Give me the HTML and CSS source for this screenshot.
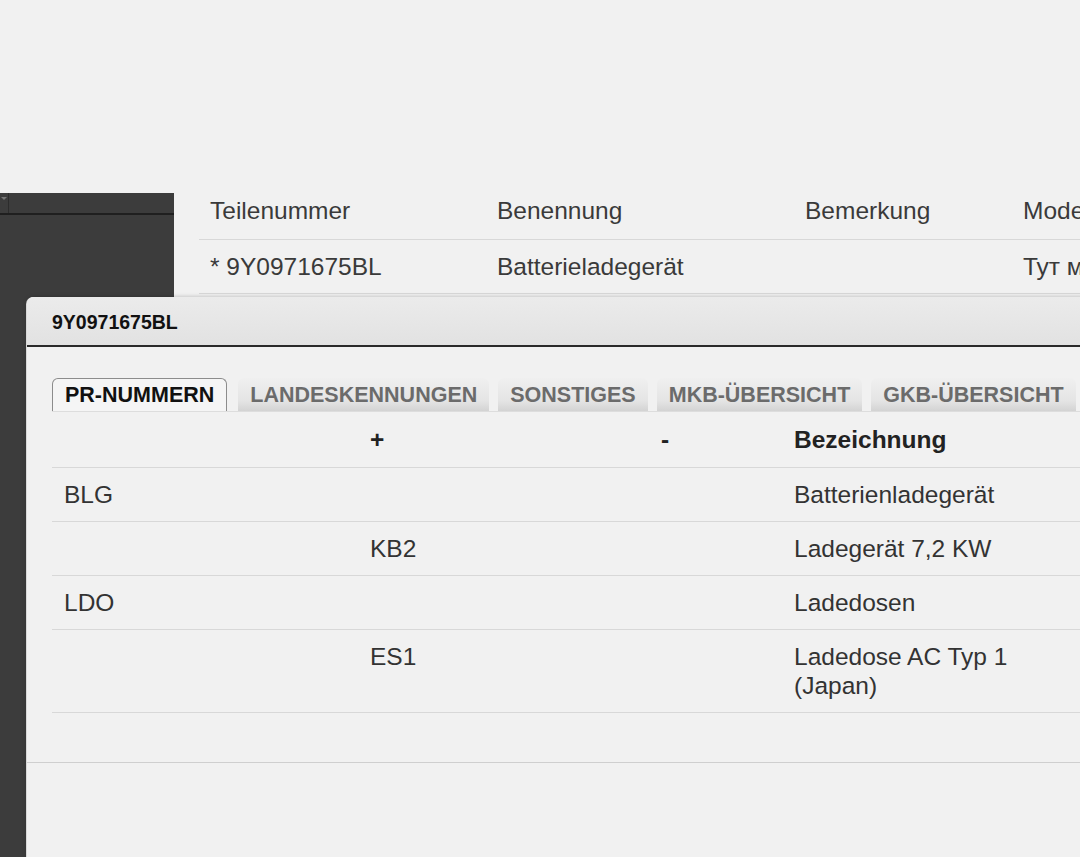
FILE: index.html
```html
<!DOCTYPE html>
<html lang="de">
<head>
    <meta charset="UTF-8">
    <meta name="viewport" content="width=device-width, initial-scale=1.0">
    <title>Teilenummer 9Y0971675BL</title>
    <link rel="stylesheet" href="styles.css">
</head>
<body>
    <div class="top-space"></div>

    <div class="workspace">
        <div class="sidebar">
            <div class="sidebar-head">
                <div class="sidebar-toggle"><span class="tri"></span></div>
            </div>
        </div>

        <div class="main">
            <table class="parts">
                <colgroup>
                    <col class="c-nr">
                    <col class="c-name">
                    <col class="c-note">
                    <col class="c-model">
                </colgroup>
                <thead>
                    <tr>
                        <th>Teilenummer</th>
                        <th>Benennung</th>
                        <th>Bemerkung</th>
                        <th>Modell</th>
                    </tr>
                </thead>
                <tbody>
                    <tr>
                        <td>* 9Y0971675BL</td>
                        <td>Batterieladegerät</td>
                        <td></td>
                        <td>Тут модель</td>
                    </tr>
                </tbody>
            </table>
        </div>
    </div>

    <div class="dialog">
        <div class="dialog-head">9Y0971675BL</div>
        <div class="dialog-body">
            <div class="tabs">
                <div class="tab active">PR-NUMMERN</div>
                <div class="tab">LANDESKENNUNGEN</div>
                <div class="tab">SONSTIGES</div>
                <div class="tab">MKB-ÜBERSICHT</div>
                <div class="tab">GKB-ÜBERSICHT</div>
            </div>

            <table class="pr">
                <colgroup>
                    <col class="c-family">
                    <col class="c-plus">
                    <col class="c-minus">
                    <col class="c-desc">
                    <col class="c-rest">
                </colgroup>
                <thead>
                    <tr>
                        <th></th>
                        <th>+</th>
                        <th>-</th>
                        <th>Bezeichnung</th>
                        <th></th>
                    </tr>
                </thead>
                <tbody>
                    <tr>
                        <td>BLG</td>
                        <td></td>
                        <td></td>
                        <td>Batterienladegerät</td>
                        <td></td>
                    </tr>
                    <tr>
                        <td></td>
                        <td>KB2</td>
                        <td></td>
                        <td>Ladegerät 7,2 KW</td>
                        <td></td>
                    </tr>
                    <tr>
                        <td>LDO</td>
                        <td></td>
                        <td></td>
                        <td>Ladedosen</td>
                        <td></td>
                    </tr>
                    <tr>
                        <td></td>
                        <td>ES1</td>
                        <td></td>
                        <td>Ladedose AC Typ 1 (Japan)</td>
                        <td></td>
                    </tr>
                </tbody>
            </table>
        </div>
        <div class="dialog-foot"></div>
    </div>
</body>
</html>
```

FILE: styles.css
```css
html, body {
    height: 100%;
}

body {
    margin: 0;
    background-color: #f1f1f1;
    font-family: "Liberation Sans", Arial, sans-serif;
    color: #333;
    overflow: hidden;
    position: relative;
}

.top-space {
    height: 193px;
}

.workspace {
    display: flex;
    height: 664px;
}

.sidebar {
    width: 174px;
    flex: none;
    background-color: #3c3c3c;
}

.sidebar-head {
    height: 20px;
    border-bottom: 2px solid #1f1f1f;
    display: flex;
}

.sidebar-toggle {
    width: 9px;
    border-right: 1px solid #2c2c2c;
    display: flex;
    justify-content: center;
    padding-top: 4px;
    box-sizing: border-box;
}

.tri {
    width: 0;
    height: 0;
    border-left: 3px solid transparent;
    border-right: 3px solid transparent;
    border-top: 3px solid #777;
}

.main {
    flex: 1;
    min-width: 0;
    padding-left: 25px;
}

.parts {
    width: 1100px;
    border-collapse: collapse;
    table-layout: fixed;
    font-size: 24.5px;
    color: #3a3a3a;
}

.parts .c-nr { width: 287px; }
.parts .c-name { width: 308px; }
.parts .c-note { width: 218px; }

.parts th {
    font-weight: normal;
    text-align: left;
    height: 36px;
    padding: 0 11px 10px;
    border-bottom: 1px solid #d8d8d8;
    white-space: nowrap;
    overflow: hidden;
}

.parts td {
    height: 53px;
    padding: 0 11px;
    border-bottom: 1px solid #d8d8d8;
    white-space: nowrap;
    overflow: hidden;
}

/* modal window */
.dialog {
    position: absolute;
    left: 27px;
    top: 297px;
    width: 1100px;
    height: 600px;
    background-color: #f1f1f1;
    border-radius: 7px 0 0 0;
    box-shadow: -1px 0 0 #d8d8d8, 0 0 4px rgba(0, 0, 0, 0.25);
}

.dialog-head {
    height: 48px;
    line-height: 50px;
    padding-left: 25px;
    font-size: 19.5px;
    font-weight: bold;
    color: #111;
    background: linear-gradient(#ebebeb, #e2e2e2);
    border-radius: 7px 0 0 0;
    border-bottom: 2px solid #2a2a2a;
}

.dialog-body {
    padding: 31px 0 49px 25px;
}

.tabs {
    display: flex;
    gap: 9px;
    border-bottom: 1px solid #dddddd;
    height: 33px;
}

.tab {
    height: 33px;
    line-height: 34px;
    padding: 0 12px;
    font-size: 21.5px;
    font-weight: bold;
    color: #6b6b6b;
    border-radius: 6px 6px 0 0;
    background: linear-gradient(#f0f0f0, #e4e4e4 70%, #d3d3d3);
    white-space: nowrap;
}

.tab.active {
    color: #111;
    background: #f5f5f5;
    border: 1px solid #8c8c8c;
    border-bottom: none;
    line-height: 32px;
    padding: 0 12px;
    box-sizing: border-box;
    margin-right: 2px;
}

.pr {
    width: 1100px;
    border-collapse: collapse;
    table-layout: fixed;
    font-size: 24.5px;
    color: #333;
    line-height: 29px;
}

.pr .c-family { width: 306px; }
.pr .c-plus { width: 291px; }
.pr .c-minus { width: 133px; }
.pr .c-desc { width: 270px; }

.pr th {
    text-align: left;
    font-weight: bold;
    color: #222;
    padding: 13px 12px;
    border-bottom: 1px solid #d8d8d8;
}

.pr td {
    padding: 12px 12px;
    border-bottom: 1px solid #d8d8d8;
    vertical-align: top;
}

.dialog-foot {
    border-top: 1px solid #cfcfcf;
    height: 100px;
}
```
